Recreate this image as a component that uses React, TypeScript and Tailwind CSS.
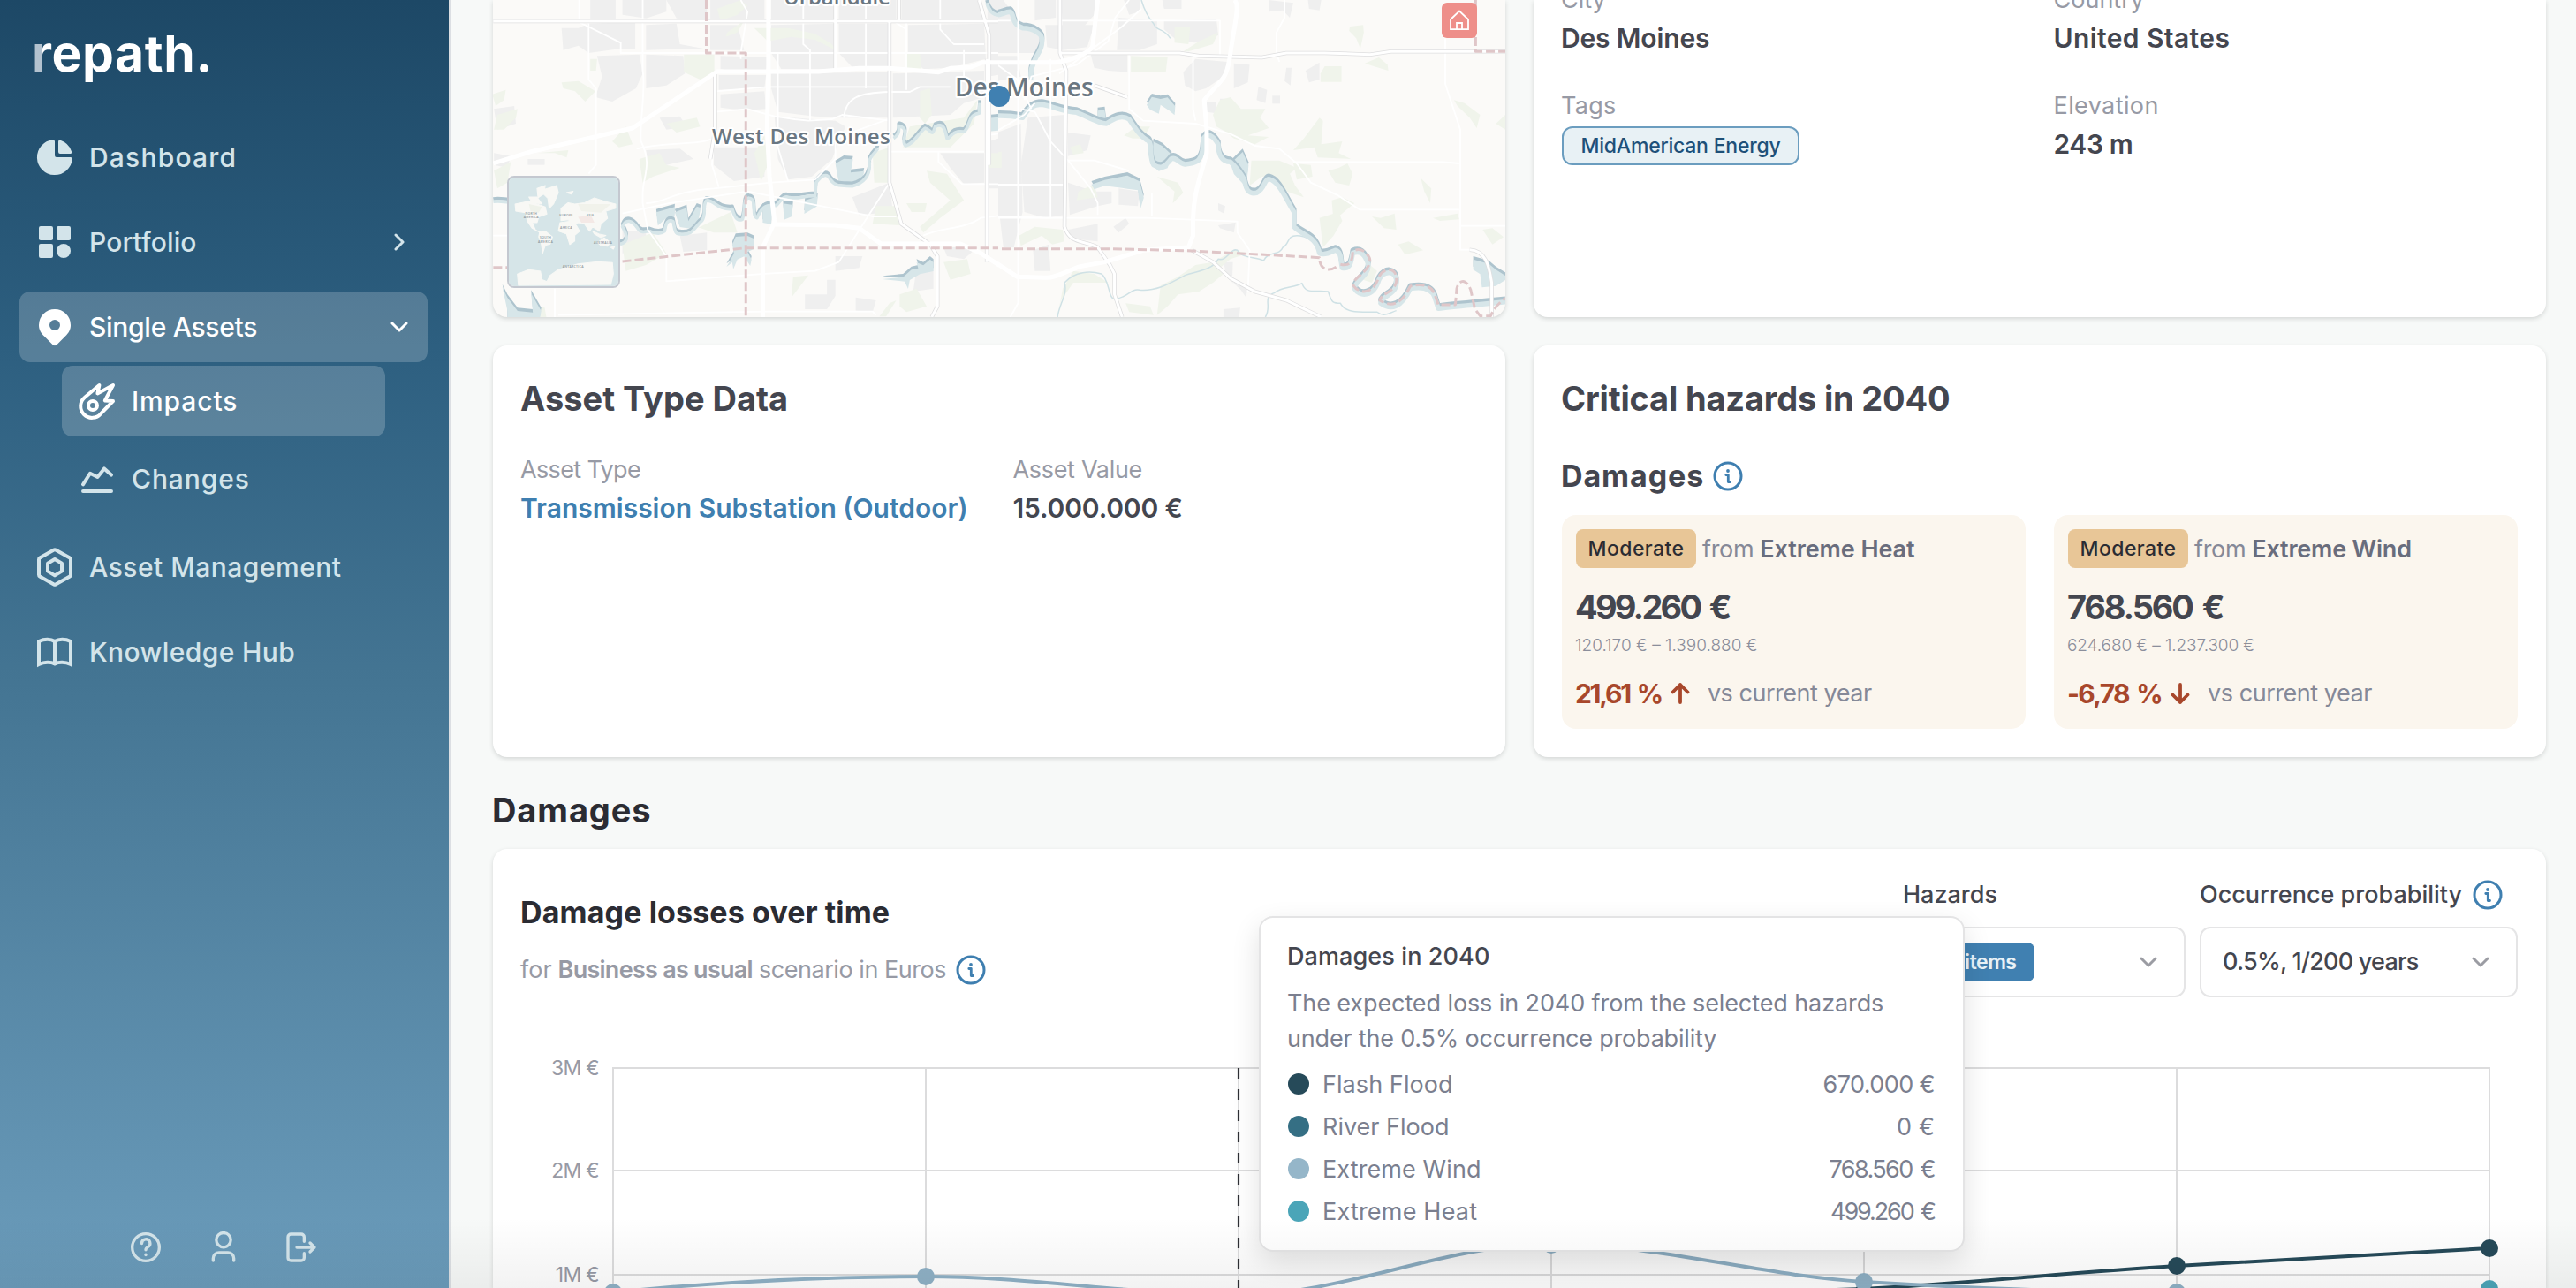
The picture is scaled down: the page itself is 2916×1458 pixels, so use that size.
import React from "react";

/* ---------- icons ---------- */

const Svg = ({ children, className = "size-12 shrink-0" }: { children: React.ReactNode; className?: string }) => (
  <svg viewBox="0 0 24 24" className={className} fill="none" stroke="currentColor" strokeWidth={2} strokeLinecap="round" strokeLinejoin="round">
    {children}
  </svg>
);

const PieIcon = () => (
  <Svg>
    <g fill="currentColor" stroke="none">
      <path d="M10.9 2.1A1 1 0 0 1 12 3.1V11a1 1 0 0 0 1 1h7.9a1 1 0 0 1 1 1.1A10 10 0 1 1 10.9 2.1z" />
      <path d="M14 3.2a.9.9 0 0 1 1.2-.8 10 10 0 0 1 6.3 6.3.9.9 0 0 1-.8 1.3H15a1 1 0 0 1-1-1z" />
    </g>
  </Svg>
);
const GridIcon = () => (
  <Svg>
    <g fill="currentColor" stroke="none">
      <rect x="3" y="3" width="8" height="8" rx="1" />
      <rect x="13" y="3" width="8" height="8" rx="1" />
      <rect x="3" y="13" width="8" height="8" rx="1" />
      <circle cx="17" cy="17" r="4" />
    </g>
  </Svg>
);
const PinIcon = () => (
  <Svg>
    <path
      fill="currentColor"
      stroke="none"
      fillRule="evenodd"
      d="M12 2a9 9 0 0 1 9 9c0 2.6-1.2 4.5-3 6.3l-4.6 4.6a2 2 0 0 1-2.8 0L6 17.3C4.200 15.500 3 13.600 3 11a9 9 0 0 1 9-9zm0 6a3 3 0 1 0 0 6 3 3 0 0 0 0-6z"
    />
  </Svg>
);
const MeteorIcon = () => (
  <Svg>
    <path d="M5 9.900 13.200 3 12.200 7.700 21 3l-4.600 8.700 4.600.3-6.900 7.100A6.500 6.500 0 1 1 5 9.900z" />
    <circle cx="9.500" cy="14.500" r="2.500" />
  </Svg>
);
const TrendIcon = () => (
  <Svg>
    <path d="M4 15.200 8 8.900l4.200 2.100L16 6.200l4 3.600M4 19h16" />
  </Svg>
);
const HexIcon = () => (
  <Svg>
    <path d="M11.500 2.300a1 1 0 0 1 1 0l8 4.500a1 1 0 0 1 .5.9v8.600a1 1 0 0 1-.5.9l-8 4.500a1 1 0 0 1-1 0l-8-4.500a1 1 0 0 1-.5-.9V7.700a1 1 0 0 1 .5-.9z" />
    <path d="M12 7.500 16 9.900v4.400L12 16.700 8 14.300V9.900z" />
  </Svg>
);
const BookIcon = () => (
  <Svg>
    <path strokeLinecap="butt" strokeLinejoin="miter" d="M12 18.700c-2.200-1.200-6-1.200-9 .3V6c3-1.500 6.800-1.500 9 0 2.200-1.500 6-1.500 9 0v13c-3-1.500-6.800-1.500-9-.3zM12 6v12.700" />
  </Svg>
);
const HelpIcon = () => (
  <Svg className="size-10">
    <circle cx="12" cy="12" r="9.200" />
    <path d="M9.300 9.300a2.800 2.800 0 1 1 4 2.500c-.8.400-1.300.9-1.300 1.900" />
    <path d="M12 16.900v.2" />
  </Svg>
);
const UserIcon = () => (
  <Svg className="size-10">
    <circle cx="12" cy="7" r="4.900" />
    <path d="M5 21v-1.500a4 4 0 0 1 4-4h6a4 4 0 0 1 4 4V21" />
  </Svg>
);
const LogoutIcon = () => (
  <Svg className="size-10">
    <path d="M14 8V5a2 2 0 0 0-2-2H5a2 2 0 0 0-2 2v14a2 2 0 0 0 2 2h7a2 2 0 0 0 2-2v-3" />
    <path d="M9 12h12M18 9l3 3-3 3" />
  </Svg>
);
const InfoIcon = () => (
  <svg viewBox="0 0 34 34" className="size-[34px] shrink-0 text-[#3f7fb0]" fill="none" stroke="currentColor">
    <circle cx="17" cy="17" r="15" strokeWidth="3" />
    <circle cx="17" cy="11" r="1.900" fill="currentColor" stroke="none" />
    <path d="M14.800 15.500H17.300V23.500M17.300 23.500H19.500" strokeWidth="2.800" strokeLinecap="round" strokeLinejoin="round" />
  </svg>
);
const Chevron = ({ className }: { className: string }) => (
  <svg viewBox="0 0 20 12" className={className} fill="none" stroke="currentColor" strokeWidth="3" strokeLinecap="round" strokeLinejoin="round">
    <path d="M2 2l8 8 8-8" />
  </svg>
);
const Arrow = ({ down }: { down?: boolean }) => (
  <svg viewBox="0 0 22 24" className="h-6 w-[22px]" fill="none" stroke="#a8472b" strokeWidth="3.800" strokeLinecap="round" strokeLinejoin="round">
    {down ? <path d="M11 2v20M2.500 13.500 11 22l8.500-8.500" /> : <path d="M11 22V2M2.500 10.500 11 2l8.500 8.500" />}
  </svg>
);

/* ---------- sidebar ---------- */

function NavItem({ icon, label, track = "", active, sub, chevron }: { icon: React.ReactNode; label: string; track?: string; active?: boolean; sub?: boolean; chevron?: "right" | "down" }) {
  return (
    <div
      className={`flex h-20 items-center rounded-xl px-4 text-[30px] font-medium ${sub ? "ml-12 w-[366px]" : "w-[462px]"} ${
        active ? "bg-white/20 text-white" : "text-[#d3e4ea]"
      }`}
    >
      {icon}
      <span className={`ml-[15px] flex-1 whitespace-nowrap ${track}`}>{label}</span>
      {chevron && <Chevron className={`mr-[6px] h-3 w-5 ${chevron === "right" ? "-rotate-90" : ""}`} />}
    </div>
  );
}

function Sidebar() {
  return (
    <aside className="flex h-full w-[510px] shrink-0 flex-col border-r-2 border-[#dcdfe3] bg-[linear-gradient(180deg,#1d4866_0%,#2d5f80_27%,#447593_53%,#6b9cbb_100%)] pl-[22px]">
      <div className="mt-[21px] ml-[14px] h-20 w-fit bg-[linear-gradient(90deg,#b3c2cf_12px,#ffffff_12px)] bg-clip-text text-[57px] leading-[80px] font-bold tracking-[0.6px] text-transparent">
        repath.
      </div>
      <nav className="mt-[37px] flex flex-col">
        <NavItem icon={<PieIcon />} label="Dashboard" track="tracking-[1.2px]" />
        <div className="h-4" />
        <NavItem icon={<GridIcon />} label="Portfolio" track="tracking-[0.1px]" chevron="right" />
        <div className="h-4" />
        <NavItem icon={<PinIcon />} label="Single Assets" track="tracking-[-0.3px]" active chevron="down" />
        <div className="h-1" />
        <NavItem icon={<MeteorIcon />} label="Impacts" track="tracking-[0.9px]" active sub />
        <div className="h-2" />
        <NavItem icon={<TrendIcon />} label="Changes" track="tracking-[0.9px]" sub />
        <div className="h-5" />
        <NavItem icon={<HexIcon />} label="Asset Management" track="tracking-[0.5px]" />
        <div className="h-4" />
        <NavItem icon={<BookIcon />} label="Knowledge Hub" track="tracking-[0.4px]" />
      </nav>
      <div className="mt-auto mb-[26px] ml-[123px] flex gap-12 text-[#d3e4ea]">
        <HelpIcon />
        <UserIcon />
        <LogoutIcon />
      </div>
    </aside>
  );
}

/* ---------- map ---------- */

const NS = { vectorEffect: "non-scaling-stroke" as const };

const urbanWest = [
  "250,95 300,95 330,80 468,75 468,165 425,165 330,180 300,155 255,170",
  "335,0 410,0 410,70 335,70",
  "430,0 560,0 560,40 500,62 430,50",
  "560,0 680,0 680,70 590,62",
  "690,0 850,0 850,65 690,65",
  "690,85 770,85 790,170 690,170",
  "870,0 1060,0 1060,65 870,65",
  "870,85 1060,80 1060,235 900,235 870,180",
  "1070,0 1240,0 1240,65 1070,65",
  "1070,80 1215,80 1215,230 1110,228 1070,180",
  "1255,0 1480,0 1500,65 1255,65",
  "1275,85 1500,80 1505,200 1400,230 1320,235 1275,180",
  "500,85 590,80 600,150 670,165 500,170",
  "355,190 480,185 490,250 470,300 400,345 350,330 370,260",
  "500,185 610,190 615,250 560,290 500,300",
  "720,190 860,195 855,240 800,250 720,235",
  "715,255 855,255 850,300 715,305",
  "870,250 1220,245 1220,400 1080,400 1000,395 890,380 870,300",
  "720,320 850,310 855,370 790,375 720,365",
  "540,400 600,395 620,430 560,440",
  "880,395 1060,410 1090,430 1050,540 990,600 920,610 890,540",
  "700,500 850,500 850,600 760,615 700,560",
  "500,510 600,505 640,540 560,560 510,600",
  "1230,250 1500,240 1500,330 1440,350 1400,390 1230,400",
  "1370,520 1500,520 1500,620 1440,625 1400,570",
  "1510,0 1568,0 1568,250 1510,260",
  "1515,480 1568,460 1568,640 1515,640",
  "50,370 110,360 115,420 60,440",
  "50,520 100,530 90,570 50,560",
  "150,540 200,540 200,560 150,560",
  "430,780 500,790 500,850 430,860",
  "600,800 680,790 680,850 610,855",
  "970,1000 1035,1000 1035,950 1060,950 1060,1005 1035,1050 970,1050",
  "1060,870 1140,870 1130,910 1060,920",
  "1110,670 1220,620 1230,720 1130,730",
  "1300,910 1350,910 1350,980 1290,990",
  "1120,1010 1180,1020 1170,1060 1120,1055",
  "1380,840 1480,840 1440,880 1390,870",
];
const parksWest = [
  "820,95 920,95 1000,115 1050,150 1060,170 1000,135 930,125 860,140",
  "335,200 355,200 352,240 335,240",
  "612,185 702,185 702,245 660,270 612,245",
  "250,280 300,275 350,310 320,345 290,310 255,300",
  "45,320 85,305 80,340 55,360",
  "60,390 120,370 115,400 80,440 50,440",
  "480,540 540,520 560,560 600,570 520,600 490,620",
  "180,520 270,510 265,535 230,520",
  "400,480 440,430 460,490 420,500",
  "560,420 650,400 660,430 590,450",
  "820,520 850,460 860,560 840,615",
  "50,580 100,550 90,620 60,640",
  "710,30 780,0 800,20 770,50 720,70",
  "740,110 790,70 770,110 735,125",
  "1310,310 1340,300 1345,390 1325,420 1310,400",
  "1270,180 1310,180 1315,235 1270,235",
  "1280,430 1440,400 1480,340 1470,420 1400,500 1260,500",
  "1170,520 1220,500 1220,620 1175,620",
  "1270,690 1330,690 1325,720 1285,720",
  "1330,580 1390,590 1440,680 1370,740 1320,790 1310,770 1400,680 1340,620",
  "430,830 520,790 560,860 500,900 440,920",
  "660,770 750,720 770,790 700,790 650,770",
  "1180,700 1240,700 1250,765 1170,760",
  "1250,1000 1300,980 1330,1040 1270,1060 1250,1040",
  "1380,890 1450,880 1460,930 1400,950",
  "1190,1075 1220,1030 1240,1020 1210,1075",
  "935,940 980,935 950,980 930,1010",
  "175,1040 200,1045 205,1077 180,1077",
  "1515,520 1550,520 1550,570 1515,570",
];
const riverWest = [
  "M48 675 C70 670 90 680 120 676",
  "M423 820 C450 810 445 790 430 760 C440 730 460 740 475 765 C485 785 500 775 510 775 C530 785 545 785 555 775 C558 745 565 735 580 742 C585 765 583 785 600 785 C640 790 640 765 665 740 C680 715 665 690 678 672 C700 665 710 705 755 700 C765 740 775 740 785 735 C795 700 785 660 805 663 C830 665 810 725 828 730 C840 700 850 683 885 688 C900 670 905 655 920 660 C950 668 960 655 1000 655 L1003 610 C1020 585 1035 575 1045 600 C1060 625 1080 620 1110 622 C1150 610 1165 580 1160 535 C1170 510 1185 500 1185 495",
  "M1232 460 C1260 440 1240 415 1250 418 C1285 430 1250 470 1268 485 C1290 480 1300 450 1325 425 C1345 430 1345 460 1355 420 C1380 405 1385 430 1390 460 C1400 465 1400 430 1440 438 C1460 420 1450 380 1485 375 L1487 340",
];
const lakesWest = [
  "530,710 585,692 583,735 560,730 535,755",
  "585,710 620,695 625,740 650,690 662,695 655,735 630,765 600,760",
  "845,690 875,690 870,750 845,745",
  "905,680 935,685 930,725 908,735",
  "970,670 1008,655 1005,690 968,715",
  "1060,545 1085,528 1112,530 1105,575 1145,570 1140,600 1100,615 1070,610",
  "755,820 765,793 800,790 820,800 818,835 800,845 812,870 808,892 790,860 770,870 758,903 755,880 738,895 760,850",
  "75,965 90,1000 120,1045 165,1050 160,985 190,1045 185,1077 90,1077 90,1045",
  "1200,937 1260,930 1285,905 1305,900 1300,880 1320,890 1340,870 1350,880 1350,910 1310,920 1280,940 1275,970 1265,945 1205,938",
  "1512,390 1568,385 1568,430 1515,435",
];
const minorWest = [
  "M302 0V75L425 145V180H1568",
  "M330 75V270L352 300V560L330 590",
  "M490 0V240C500 300 480 420 485 480C520 560 490 600 490 660V690L505 780L560 870V955L850 930L1000 920L1070 890L1220 620",
  "M780 0L800 40L780 180V200",
  "M965 0V150L985 170V410",
  "M1150 0V300",
  "M1370 0V100L1410 150H1500",
  "M705 380L800 370L880 395L940 405L980 410L1050 405L1080 390L1220 410",
  "M705 310L860 295H1220",
  "M1085 400C1090 330 1130 315 1220 312H1280L1310 295H1400",
  "M472 505C560 480 650 495 700 470",
  "M700 470L695 560L715 635",
  "M890 180V500L920 615",
  "M1220 515H1500",
  "M1365 515V550L1435 625H1568",
  "M500 690C560 690 570 650 700 640L870 620L1000 610L1060 540V470L1215 405",
  "M430 725L570 690L800 650L1170 735H1240",
  "M48 800H95",
  "M230 980V1077M240 1070L860 1058H1170L1180 1070",
  "M1320 800C1380 770 1440 780 1490 740L1568 730",
  "M1440 170V280M1270 70V305M1230 70L1270 100",
  "M1505 460L1568 450",
];
const casedWest = ["M48 72H1568", "M704 245V440L690 540", "M1060 0V245", "M1220 75V620L1255 760L1340 830L1362 870V1040L1345 1077", "M1485 0L1515 120V560M1508 200V890", "M1248 0V70"];
const highwayWest = [
  "M48 555L160 515L460 435L710 243H1010L1130 232H1220L1365 245L1400 232L1460 228L1495 212H1568",
  "M862 0V240L858 430L865 600L880 755L845 840V1077",
  "M880 762L1060 765L1130 775L1195 828H1430L1490 860L1568 918",
];
const bordersWest = ["M678 0V180H795V1077", "M48 908H92M430 888L795 842H1568"];

const urbanEast = [
  "0,0 40,0 70,50 100,90 150,110 140,180 0,180",
  "130,0 190,0 190,60 130,70",
  "205,0 310,0 300,50 270,90 210,90",
  "160,85 300,85 280,160 210,170 165,160",
  "370,60 480,70 480,150 430,170 365,170",
  "385,0 430,0 430,40 400,50",
  "495,0 550,0 550,30 500,30",
  "500,70 650,65 655,120 590,145 540,140 500,100",
  "290,185 395,185 395,245 340,240 300,230",
  "555,245 590,200 680,210 670,260 620,300 590,310 560,290",
  "700,215 745,220 740,280 700,300",
  "800,0 870,10 860,60 840,35 800,40",
  "850,230 865,230 862,290 845,275",
  "905,240 945,212 945,270 915,280",
  "0,190 80,190 90,260 0,280",
  "110,400 215,390 210,620 215,730 160,740 100,720 90,560",
  "0,460 90,420 95,720 70,840 40,840 30,740 0,730",
  "225,450 290,460 280,510 225,530",
  "225,620 300,650 350,650 350,690 310,700 230,730",
  "370,640 430,650 425,700 370,695",
  "225,780 310,760 310,820 230,810",
  "355,770 390,740 400,760 370,790",
  "655,690 675,700 672,725 655,715",
  "655,765 705,755 700,790 660,775",
  "125,850 170,830 175,920 130,920",
  "670,890 697,890 695,960 740,965 735,1010 720,985 680,940",
  "670,1050 718,1045 715,1077 670,1077",
  "660,335 690,335 690,370 660,375",
  "620,345 650,345 650,385 622,380",
  "770,295 795,305 790,350 765,340",
  "810,325 832,325 832,352 810,352",
  "912,0 950,0 945,35 915,30",
];
const parksEast = [
  "405,190 510,195 505,245 405,245",
  "530,90 575,90 570,150 530,145",
  "555,175 600,140 655,110 640,150 570,175",
  "1032,90 1070,85 1072,110 1062,165 1050,130 1030,105",
  "1075,215 1115,195 1140,220 1142,240 1100,225",
  "948,250 960,225 1008,225 1008,278 948,278",
  "640,390 660,340 690,330 720,370 790,370 775,400 800,435 740,460 800,465 760,490 700,470 680,450 650,430",
  "750,545 830,545 880,570 860,590 875,630 900,670 850,650 820,600 780,600 745,630",
  "870,510 900,470 945,400 955,410 950,490 1010,480 1000,520 1035,540 940,535 930,500",
  "870,555 920,560 925,600 880,610",
  "970,580 1000,570 1025,555 1040,590 1030,630 990,620",
  "980,680 1010,670 1045,690 985,750",
  "945,740 1000,720 1010,750 985,800 955,840",
  "1095,735 1120,740 1160,725 1165,780 1130,775",
  "1170,830 1200,820 1242,850 1190,865",
  "1330,340 1360,350 1405,390 1395,435 1375,400 1340,360",
  "1235,605 1265,640 1262,690 1245,650",
  "1412,780 1440,775 1472,805 1440,830",
  "1270,740 1340,725 1345,745 1290,750",
  "480,600 540,620 555,655 525,690 530,650",
  "385,460 420,430 460,430 440,470 410,470",
  "255,650 300,625 310,670 250,680",
  "85,800 130,770 210,780 215,820 180,830 150,800 90,835",
  "230,500 260,490 270,520 240,525",
  "490,970 540,940 590,900 640,890 670,930 640,960 600,990 540,1000 510,1040 480,1070",
  "640,890 700,850 740,860 690,880 640,930",
  "240,920 300,930 340,960 240,960 205,1020 195,1075 210,980",
  "390,1030 460,1040 470,1070 400,1060",
  "0,520 35,515 35,570 0,570",
  "1090,900 1110,920 1095,960 1070,950",
  "1450,420 1477,390 1477,440",
];
const riverEast = [
  "M0 20C20 60 35 30 60 30C75 45 60 70 95 85C130 85 150 110 150 120C155 160 130 180 125 210C115 230 120 245 118 260",
  "M0 385C40 380 70 385 95 390C110 360 125 345 150 345C180 350 210 370 250 372C280 385 310 410 335 410C360 390 380 380 400 395C420 430 430 450 450 465C470 470 455 520 470 550C490 565 500 560 520 530C535 520 540 545 560 548C590 545 605 540 610 500L613 460C625 440 640 450 655 480C655 515 665 540 690 540C710 560 720 580 730 600C735 640 745 650 765 645C790 630 785 600 800 598C830 605 850 670 872 710V760C895 790 935 790 945 850C960 860 980 845 990 840C1010 845 1005 880 1010 900C1030 905 1035 890 1040 850C1060 840 1075 850 1085 890C1085 930 1045 945 1045 970C1060 1000 1100 1000 1115 940C1130 905 1165 910 1165 945C1170 990 1120 995 1120 1020C1150 1045 1180 1035 1205 970C1230 965 1265 965 1275 1000L1285 1038C1330 1030 1400 1025 1477 1015",
];
const lakesEast = [
  "450,345 465,318 490,325 510,320 532,350 530,380 515,365 490,345 485,375 460,362",
  "310,365 330,362 335,410 310,410",
  "470,470 495,485 522,515 510,560 485,570 460,545",
  "690,545 725,505 742,550 735,625 700,580",
  "292,615 330,600 395,585 430,605 442,660 432,700 425,635 395,630 330,620 300,632",
  "1385,870 1430,885 1450,905 1477,925 1477,940 1450,960 1410,965 1405,920 1385,905",
];
const minorEast = [
  "M0 70H60M82 0V300M200 70H660V185M845 0V60L822 110V180L830 210",
  "M435 30L380 90L200 250M400 0L360 60L340 140L250 220L120 260L100 340",
  "M400 180V370L440 410L590 420L620 430L690 455L760 495L830 505L880 555L920 620L1000 665L1060 712H1345",
  "M583 190V370L590 410M870 550H1300L1345 555",
  "M1305 130V285L1348 440V848H1380M1350 767H1477",
  "M82 240V1030L60 1077M175 200V740L0 735M90 370L130 380L175 480L225 545L290 640L310 690V730",
  "M225 545H300L400 580M0 627H215M0 740L450 740L710 752V790L745 850L740 990M465 655V735",
  "M0 200L80 270L120 370M0 460L100 390L130 350",
];
const casedEast = [
  "M200 180H545L600 190L780 195L850 180H960L1090 185L1150 175H1477",
  "M202 0V180L220 240L215 770C230 830 270 815 310 840L345 900L358 930V1000L380 1077",
  "M0 120V290L5 560M300 290L395 330M580 850L640 890L690 945L760 990L850 1020L950 1077",
  "M1375 848C1420 850 1430 900 1438 960V1077",
];
const highwayEast = ["M0 212H190C240 205 280 180 295 160L310 0", "M700 0C720 10 700 90 690 180C680 280 660 270 615 340L622 440V520C600 620 580 660 583 800L570 840L440 850L330 890L260 905C220 920 190 945 160 943L80 940L0 878"];
const creeksEast = [
  "M435 0C445 40 455 60 470 80C480 110 495 90 518 130",
  "M195 1077C200 1030 225 1000 215 960C245 920 290 920 320 930C345 950 340 1020 360 1015C400 1010 400 980 430 985C480 990 520 960 560 935C600 920 640 915 655 880C680 890 690 840 710 850C725 880 760 870 785 885C800 850 830 870 840 840C860 830 850 800 880 800C910 800 930 820 945 850",
  "M790 1077C810 1040 780 1010 815 995C840 970 870 980 895 962C905 1000 930 985 970 990C980 1030 985 1030 1005 1030C1020 1065 1060 1060 1110 1060C1130 1080 1150 1060 1165 1055",
];
const bordersEast = [
  "M0 845H340L580 852L740 862L945 875C945 915 970 925 995 905",
  "M1005 898C1030 905 1040 890 1040 855C1060 835 1090 860 1090 890C1080 930 1040 940 1042 970C1060 1000 1100 1000 1115 940C1130 905 1165 910 1165 945C1170 990 1120 995 1118 1020C1150 1045 1180 1035 1205 972C1230 963 1265 965 1275 1000L1285 1035H1334L1338 980C1345 945 1368 950 1378 985L1390 1050L1405 1073H1435C1450 1035 1465 1025 1477 1012",
  "M1392 0V175H1477",
];

type Tile = { urban: string[]; parks: string[]; river: string[]; lakes: string[]; creeks: string[]; minor: string[]; cased: string[]; highway: string[]; borders: string[]; rw: number };
const TileLayer = ({ t }: { t: Tile }) => (
  <g fill="none" strokeLinejoin="round">
    {t.urban.map((p) => <polygon key={p} points={p} fill="#efefef" />)}
    {t.parks.map((p) => <polygon key={p} points={p} fill="#f0f4eb" />)}
    {t.creeks.map((p) => <path key={p} d={p} stroke="#cfe1e5" strokeWidth="1.500" style={NS} />)}
    {t.lakes.map((p) => <polygon key={p} points={p} fill="#aec4ce" />)}
    {t.lakes.map((p) => <polygon key={p} points={p} fill="#d7e6e9" transform="translate(0 11)" />)}
    {t.river.map((p) => <path key={p} d={p} stroke="#aec4ce" strokeWidth={t.rw} style={NS} />)}
    {t.river.map((p) => <path key={p} d={p} stroke="#d7e6e9" strokeWidth={t.rw} style={NS} transform="translate(0 10)" />)}
    {t.minor.map((p) => <path key={p} d={p} stroke="#ffffff" strokeWidth="1.800" style={NS} />)}
    {t.cased.map((p) => <path key={p} d={p} stroke="#dededf" strokeWidth="4.500" style={NS} />)}
    {t.cased.map((p) => <path key={p} d={p} stroke="#ffffff" strokeWidth="3" style={NS} />)}
    {t.highway.map((p) => <path key={p} d={p} stroke="#ffffff" strokeWidth="5" style={NS} />)}
    {t.borders.map((p) => <path key={p} d={p} stroke="#dfc6c8" strokeWidth="3" strokeDasharray="10 4" style={NS} />)}
  </g>
);

const continents = [
  "108,690 150,680 175,690 200,700 205,725 180,735 175,755 160,755 170,780 185,790 160,775 145,750 140,720 110,715",
  "150,665 175,665 190,690 160,685",
  "175,635 200,625 195,655 178,668",
  "192,640 235,625 240,650 225,690 212,705 208,670 195,655",
  "183,787 200,785 222,805 215,830 200,835 192,862 188,830 180,805",
  "248,705 270,685 290,690 320,685 350,668 380,680 415,690 415,705 385,715 390,740 370,760 365,785 345,770 335,785 320,760 300,755 290,765 270,745 248,748",
  "245,755 275,750 295,765 305,785 290,800 290,820 275,832 265,795 240,785",
  "360,825 380,808 400,825 390,838 370,835",
  "345,785 365,795 385,800 370,808 350,795",
  "118,975 115,935 150,920 185,925 190,955 205,962 215,940 240,920 300,900 360,892 405,895 408,935 400,972",
  "265,650 285,645 280,655",
  "400,842 412,838 408,848",
];
const worldLabels: [number, number, string][] = [
  [157, 726, "NORTH"],
  [157, 739, "AMERICA"],
  [264, 732, "EUROPE"],
  [337, 732, "ASIA"],
  [264, 778, "AFRICA"],
  [201, 812, "SOUTH"],
  [201, 825, "AMERICA"],
  [376, 828, "AUSTRALIA"],
  [285, 914, "ANTARCTICA"],
];

const MiniMap = () => (
  <svg viewBox="574 199 128 127" className="size-full">
    <rect x="574" y="199" width="128" height="127" fill="#d6e5e8" />
    <g transform="translate(540 0) scale(.3827 .3333)">
      {continents.map((c) => <polygon key={c} points={c} fill="#f8f8f5" stroke="#f8f8f5" strokeWidth="3" strokeLinejoin="round" />)}
      <polygon points="150,690 190,700 180,720 155,715" fill="#eff2ea" />
      <polygon points="300,690 400,690 370,720 310,715" fill="#f1f2eb" />
      <polygon points="300,735 340,730 350,755 310,755" fill="#f4e9e6" />
    </g>
    {worldLabels.map(([x, y, t], i) => (
      <text key={i} x={540 + x * 0.3827} y={y / 3} textAnchor="middle" fontSize="3.600" fontWeight="600" fill="#8c969c" letterSpacing=".3" style={{ fontFamily: "Open Sans, sans-serif" }}>
        {t}
      </text>
    ))}
  </svg>
);

const MapLabel = ({ x, y, size, track, children }: { x: number; y: number; size: number; track: number; children: string }) => (
  <text x={x} y={y} fontSize={size} fontWeight="600" fill="#6a7782" stroke="#ffffff" strokeWidth="4" strokeLinejoin="round" paintOrder="stroke" letterSpacing={track} style={{ fontFamily: "Open Sans, sans-serif" }}>
    {children}
  </text>
);

function MapCard() {
  return (
    <div className="relative h-[359px] overflow-hidden rounded-b-2xl bg-[#fbfaf8] shadow-[0_2px_5px_rgba(30,40,40,0.16)]">
      <svg viewBox="558 0 1146 359" className="h-[359px] w-[1146px]">
        <clipPath id="west"><rect x="540" y="0" width="590" height="359" /></clipPath>
        <clipPath id="east"><rect x="1130" y="0" width="600" height="359" /></clipPath>
        <g clipPath="url(#west)">
          <g transform="translate(540 0) scale(.3827 .3333)">
            <TileLayer t={{ urban: urbanWest, parks: parksWest, river: riverWest, lakes: lakesWest, creeks: [], minor: minorWest, cased: casedWest, highway: highwayWest, borders: bordersWest, rw: 3.6 }} />
            <path d="M1508 0C1515 30 1530 45 1550 40L1568 35" fill="none" stroke="#aec4ce" strokeWidth="4" style={NS} />
            <path d="M1508 10C1515 40 1530 55 1550 50L1568 45" fill="none" stroke="#d7e6e9" strokeWidth="4" style={NS} />
          </g>
        </g>
        <g clipPath="url(#east)">
          <g transform="translate(1120 0) scale(.3954 .3333)">
            <TileLayer t={{ urban: urbanEast, parks: parksEast, river: riverEast, lakes: lakesEast, creeks: creeksEast, minor: minorEast, cased: casedEast, highway: highwayEast, borders: bordersEast, rw: 5.5 }} />
          </g>
        </g>
        <MapLabel x={887} y={5} size={24} track={-0.1}>Urbandale</MapLabel>
        <MapLabel x={806} y={162.500} size={24} track={0.3}>West Des Moines</MapLabel>
        <MapLabel x={1081} y={109} size={28} track={0.1}>Des Moines</MapLabel>
        <circle cx="1131" cy="109" r="12" fill="#4080b1" />
      </svg>
      <div className="absolute top-[199px] left-4 h-[127px] w-[128px] overflow-hidden rounded-lg border-2 border-[#c4c8d0]">
        <MiniMap />
      </div>
      <div className="absolute top-[3px] left-[1074px] flex size-10 items-center justify-center rounded-md bg-[#ee8f8a]">
        <svg viewBox="0 0 24 24" className="size-6" fill="none" stroke="white" strokeWidth="1.800">
          <path d="M2 22.200V11L12 1.500 22 11v11.200z" />
          <path d="M9 22v-7h6v7" />
        </svg>
      </div>
    </div>
  );
}

/* ---------- cards ---------- */

const label = "text-[27px] leading-[42px] text-[#979aa5] whitespace-nowrap";
const value = "text-[30px] leading-[44px] font-semibold text-[#44464f] whitespace-nowrap";
const card = "bg-white shadow-[0_2px_5px_rgba(30,40,40,0.16)]";

function LocationCard() {
  return (
    <div className={`h-[359px] overflow-hidden rounded-b-2xl pr-8 pl-[31px] ${card}`}>
      <div className="-mt-[21px] grid grid-cols-2 gap-x-8">
        <div>
          <div className={label}>City</div>
          <div className={`${value} tracking-[-0.15px]`}>Des Moines</div>
        </div>
        <div>
          <div className={label}>Country</div>
          <div className={`${value} tracking-[0.4px]`}>United States</div>
        </div>
        <div className="mt-[34px]">
          <div className={`${label} tracking-[0.3px]`}>Tags</div>
          <div className="mt-[2px] ml-px flex h-11 w-[269px] items-center justify-center rounded-xl border-2 border-[#6b9dbf] bg-[#e8f1f5] text-[23px] font-medium tracking-[-0.22px] whitespace-nowrap text-[#1e5079]">MidAmerican Energy</div>
        </div>
        <div className="mt-[34px]">
          <div className={`${label} tracking-[0.4px]`}>Elevation</div>
          <div className={`${value} tracking-[-0.4px]`}>243 m</div>
        </div>
      </div>
    </div>
  );
}

function AssetTypeCard() {
  return (
    <div className={`h-[466px] rounded-2xl pt-9 pr-8 pl-[31px] ${card}`}>
      <h2 className="text-[38px] leading-[48px] font-bold text-[#44464f]">Asset Type Data</h2>
      <div className="mt-9 grid grid-cols-2 gap-x-8">
        <div>
          <div className={`${label} tracking-[-0.64px]`}>Asset Type</div>
          <div className="text-[30px] leading-[44px] font-semibold whitespace-nowrap text-[#3f7fb0]">Transmission Substation (Outdoor)</div>
        </div>
        <div>
          <div className={`${label} tracking-[-0.32px]`}>Asset Value</div>
          <div className={`${value} tracking-[-0.16px]`}>15.000.000 €</div>
        </div>
      </div>
    </div>
  );
}

function HazardPanel({ name, nameTrack, amount, amountTrack, range, rangeTrack = "", pct, pctTrack, down }: { name: string; nameTrack: string; amount: string; amountTrack: string; range: string; rangeTrack?: string; pct: string; pctTrack: string; down?: boolean }) {
  return (
    <div className="h-[242px] rounded-2xl bg-[#fbf6ee] p-4 whitespace-nowrap">
      <div className="flex h-11 items-center text-[27px] leading-10">
        <span className="flex h-11 w-[136px] items-center justify-center rounded-lg bg-[#e8c697] text-[23px] font-medium tracking-[0.4px] text-[#2b2c33]">Moderate</span>
        <span className="mt-0.5 ml-[7px] tracking-[-0.3px] text-[#858998]">from</span>
        <span className={`mt-0.5 ml-[7px] font-semibold text-[#696d7d] ${nameTrack}`}>{name}</span>
      </div>
      <div className={`mt-5 -ml-px text-[38px] leading-[48px] font-bold text-[#44464f] [word-spacing:4px] ${amountTrack}`}>{amount}</div>
      <div className={`mt-[6px] -ml-px text-[19px] leading-7 font-light text-[#8b8e9b] ${rangeTrack}`}>{range}</div>
      <div className="mt-5 -ml-px flex h-10 items-center">
        <span className={`text-[30px] font-bold text-[#a8472b] [word-spacing:3px] ${pctTrack}`}>{pct}</span>
        <span className="ml-[10px]"><Arrow down={down} /></span>
        <span className="ml-[20px] text-[27px] tracking-[-0.47px] text-[#858998]">vs current year</span>
      </div>
    </div>
  );
}

function CriticalCard() {
  return (
    <div className={`h-[466px] rounded-2xl px-8 pt-9 ${card}`}>
      <h2 className="-ml-px text-[38px] leading-[48px] font-bold tracking-[-0.17px] text-[#44464f]">Critical hazards in 2040</h2>
      <div className="mt-[42px] -ml-px flex h-11 items-center gap-[10px]">
        <h3 className="text-[34px] leading-[44px] font-bold tracking-[0.9px] text-[#44464f]">Damages</h3>
        <InfoIcon />
      </div>
      <div className="mt-[22px] grid grid-cols-2 gap-x-8">
        <HazardPanel name="Extreme Heat" nameTrack="tracking-[-0.1px]" amount="499.260 €" amountTrack="tracking-[-2.8px]" range="120.170 € – 1.390.880 €" pct="21,61 %" pctTrack="tracking-[-2.3px]" />
        <HazardPanel name="Extreme Wind" nameTrack="tracking-[-0.2px]" amount="768.560 €" amountTrack="tracking-[-2.2px]" range="624.680 € – 1.237.300 €" rangeTrack="tracking-[-0.1px]" pct="-6,78 %" pctTrack="tracking-[-1.7px]" down />
      </div>
    </div>
  );
}

/* ---------- chart ---------- */

const years = [694, 1048, 1402, 1756, 2110, 2464, 2818];

function Chart() {
  return (
    <svg viewBox="590 1150 2260 308" className="mt-[21px] h-[308px] w-[2260px] shrink-0">
      <g stroke="#dcdcdd" strokeWidth="2">
        {[1209, 1325, 1443].map((y) => <path key={y} d={`M693 ${y}H2819`} />)}
        {years.map((x) => <path key={x} d={`M${x} 1209V1458`} />)}
      </g>
      <path d="M1402 1209V1458" stroke="#2f3035" strokeWidth="2.200" strokeDasharray="12 12" />
      <g fontSize="23" fill="#979aa5" textAnchor="end" letterSpacing="-.7" className="font-['Inter',sans-serif]">
        <text x="678" y="1217">3M €</text>
        <text x="678" y="1333">2M €</text>
        <text x="678" y="1451">1M €</text>
      </g>
      <g fill="none" strokeWidth="4">
        <path stroke="#264a59" d="M1756 1464C1874 1464 1992 1463 2110 1459C2228 1453 2346 1440 2464 1433C2582 1426 2700 1420 2818 1413" />
        <path stroke="#8fb1c6" d="M694 1463C812 1451 930 1445 1048 1445C1166 1445 1284 1466 1402 1466C1520 1466 1638 1408 1756 1408C1874 1408 1992 1444 2110 1451C2228 1458 2346 1463 2464 1463" />
      </g>
      <g fill="#264a59">
        <circle cx="2110" cy="1462" r="10" />
        <circle cx="2464" cy="1433" r="10" />
        <circle cx="2818" cy="1413" r="10" />
      </g>
      <g fill="#8fb1c6">
        <circle cx="694" cy="1463" r="10" />
        <circle cx="1048" cy="1445" r="10" />
        <circle cx="1756" cy="1409" r="10" />
        <circle cx="2110" cy="1451" r="10" />
        <circle cx="2464" cy="1463" r="10" />
      </g>
      <circle cx="2818" cy="1459" r="10" fill="#4ba5b8" />
    </svg>
  );
}

function ChartCard() {
  const select = "flex h-20 items-center rounded-xl border-2 border-[#e5e5e6] bg-white";
  return (
    <div className={`flex h-[497px] flex-col rounded-t-2xl px-8 ${card}`}>
      <div className="flex h-[168px] shrink-0 justify-between">
        <div className="-ml-px pt-[50px]">
          <h3 className="text-[34px] leading-[44px] font-bold tracking-[0.12px] text-[#2b2c33]">Damage losses over time</h3>
          <div className="mt-[23px] flex h-10 items-center text-[27px] whitespace-nowrap text-[#979aa5]">
            <span className="mr-[7px]">for</span>
            <span className="mr-[7px] font-semibold tracking-[-0.73px]">Business as usual</span>
            <span className="tracking-[-0.45px]">scenario in Euros</span>
            <span className="ml-[11px]"><InfoIcon /></span>
          </div>
        </div>
        <div className="flex gap-4 pt-8 text-[27px] font-medium whitespace-nowrap text-[#44464f]">
          <div className="w-[319px]">
            <div className="-ml-px h-10 leading-10">Hazards</div>
            <div className={`mt-4 ${select} justify-between pr-[30px] pl-4`}>
              <span className="flex h-11 items-center rounded-lg bg-[#4080b1] pr-[21px] pl-[31px] text-[23px] font-semibold tracking-[-0.5px] text-[#e8f2f7]">4 items</span>
              <Chevron className="h-3 w-5 text-[#9b9ca3]" />
            </div>
          </div>
          <div className="w-[360px]">
            <div className="flex h-10 items-center gap-3">
              <span>Occurrence probability</span>
              <InfoIcon />
            </div>
            <div className={`mt-4 ${select} justify-between pr-[30px] pl-6`}>
              <span className="tracking-[-0.77px]">0.5%, 1/200 years</span>
              <Chevron className="h-3 w-5 text-[#9b9ca3]" />
            </div>
          </div>
        </div>
      </div>
      <Chart />
    </div>
  );
}

const series: [string, string, string, string, string][] = [
  ["Flash Flood", "bg-[#264a59]", "670.000 €", "tracking-[0.07px]", "tracking-[-0.59px]"],
  ["River Flood", "bg-[#356f84]", "0 €", "", "tracking-[0.1px]"],
  ["Extreme Wind", "bg-[#95b6c9]", "768.560 €", "tracking-[0.1px]", "tracking-[-1.6px] [word-spacing:3px]"],
  ["Extreme Heat", "bg-[#4ba5b8]", "499.260 €", "tracking-[0.2px]", "tracking-[-2.1px] [word-spacing:3px]"],
];

function ChartTooltip() {
  return (
    <div className="absolute top-[1037px] left-[1425px] h-[380px] w-[799px] rounded-2xl border-2 border-[#e4e4e5] bg-white pt-[22px] pr-[32px] pl-[31px] text-[27px] text-[#7b7f8f] shadow-[0_12px_32px_rgba(0,0,0,0.12)]">
      <div className="-ml-px leading-[44px] font-medium tracking-[0.1px] text-[#44464f]">Damages in 2040</div>
      <p className="mt-[11px] -ml-px leading-10 whitespace-nowrap">
        <span className="tracking-[-0.1px]">The expected loss in 2040 from the selected hazards</span>
        <br />
        <span className="tracking-[-0.19px]">under the 0.5% occurrence probability</span>
      </p>
      <div className="mt-[7px]">
        {series.map(([name, dot, amount, t1, t2]) => (
          <div key={name} className="flex h-12 items-center leading-[46px] whitespace-nowrap">
            <span className={`size-6 rounded-full ${dot}`} />
            <span className={`mt-0.5 ml-[15px] flex-1 ${t1}`}>{name}</span>
            <span className={`mt-0.5 ${t2}`}>{amount}</span>
          </div>
        ))}
      </div>
    </div>
  );
}

export default function App() {
  return (
    <div className="relative flex h-[1458px] w-[2916px] overflow-hidden bg-[#f7f9f8] font-['Inter',sans-serif]">
      <Sidebar />
      <main className="flex flex-1 flex-col pr-[34px] pl-12">
        <div className="grid grid-cols-2 gap-8">
          <MapCard />
          <LocationCard />
          <AssetTypeCard />
          <CriticalCard />
        </div>
        <h2 className="mt-9 mb-5 -ml-px text-[38px] leading-[48px] font-bold tracking-[0.9px] text-[#2b2c33]">Damages</h2>
        <ChartCard />
      </main>
      <ChartTooltip />
      <div className="absolute bottom-0 left-0 h-20 w-full bg-linear-to-b from-black/0 to-black/5" />
    </div>
  );
}
